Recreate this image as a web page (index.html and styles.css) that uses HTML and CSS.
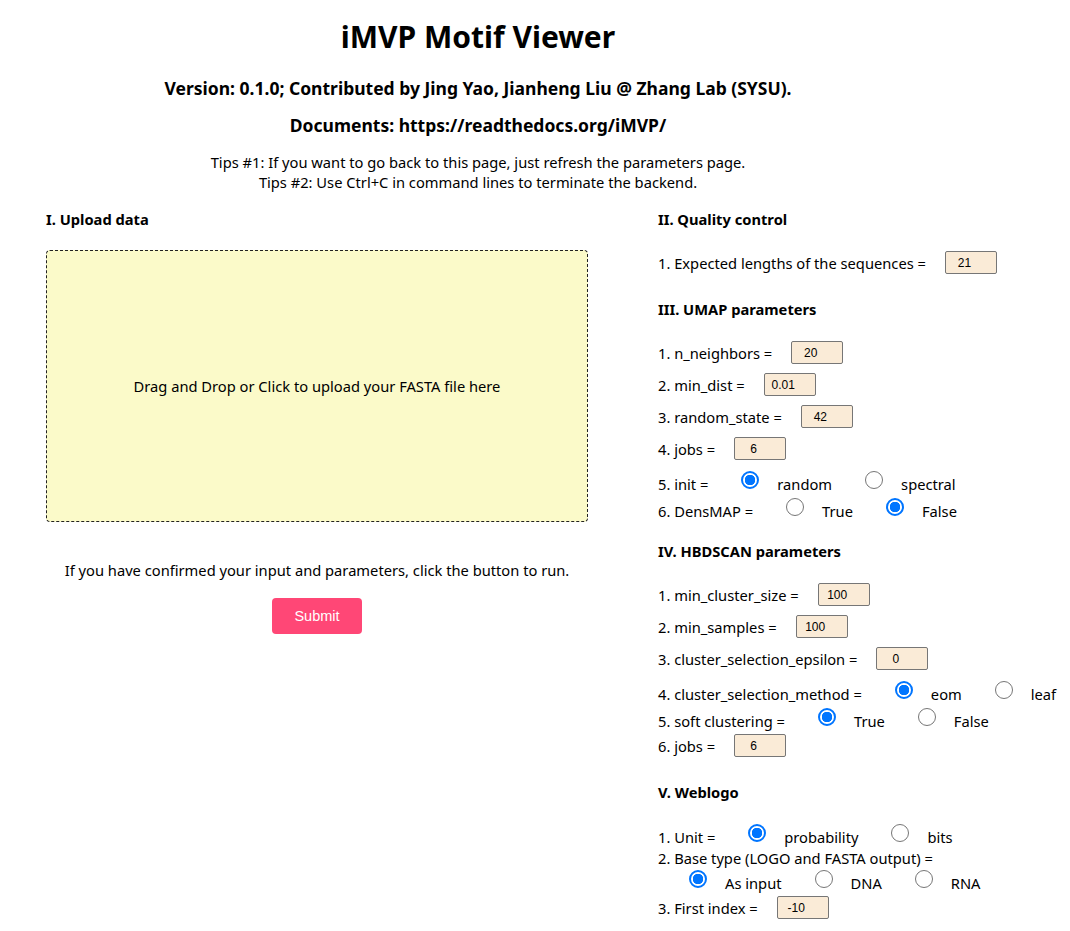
FILE: index.html
```html
<!DOCTYPE html>
<html lang="en">
<head>
<meta charset="utf-8">
<title>iMVP Motif Viewer</title>
<link rel="stylesheet" href="styles.css">
</head>
<body>
<div class="page">
  <header class="header">
    <h1 class="title">iMVP Motif Viewer</h1>
    <h3 class="subtitle">Version: 0.1.0; Contributed by Jing Yao, Jianheng Liu @ Zhang Lab (SYSU).</h3>
    <h3 class="subtitle docs">Documents: https://readthedocs.org/iMVP/</h3>
    <p class="tips">Tips #1: If you want to go back to this page, just refresh the parameters page.<br>Tips #2: Use Ctrl+C in command lines to terminate the backend.</p>
  </header>

  <div class="columns">
    <section class="col-left">
      <div class="sec-title">I. Upload data</div>
      <div class="dropzone">Drag and Drop or Click to upload your FASTA file here</div>
      <p class="confirm">If you have confirmed your input and parameters, click the button to run.</p>
      <button class="submit" type="button">Submit</button>
    </section>

    <section class="col-right">
      <div class="sec-title">II. Quality control</div>
      <div class="row input-row"><span>1. Expected lengths of the sequences =</span><input class="num" type="text" value="21"></div>

      <div class="sec-title after-input">III. UMAP parameters</div>
      <div class="row input-row"><span>1. n_neighbors =</span><input class="num" type="text" value="20"></div>
      <div class="row input-row"><span>2. min_dist =</span><input class="num" type="text" value="0.01"></div>
      <div class="row input-row"><span>3. random_state =</span><input class="num" type="text" value="42"></div>
      <div class="row input-row"><span>4. jobs =</span><input class="num" type="text" value="6"></div>
      <div class="row radio-row"><span>5. init =</span><input class="rad" type="radio" name="init" checked><span class="opt">random</span><input class="rad" type="radio" name="init"><span class="opt">spectral</span></div>
      <div class="row radio-row"><span>6. DensMAP =</span><input class="rad" type="radio" name="dens"><span class="opt">True</span><input class="rad" type="radio" name="dens" checked><span class="opt">False</span></div>

      <div class="sec-title after-radio">IV. HBDSCAN parameters</div>
      <div class="row input-row"><span>1. min_cluster_size =</span><input class="num" type="text" value="100"></div>
      <div class="row input-row"><span>2. min_samples =</span><input class="num" type="text" value="100"></div>
      <div class="row input-row"><span>3. cluster_selection_epsilon =</span><input class="num" type="text" value="0"></div>
      <div class="row radio-row"><span>4. cluster_selection_method =</span><input class="rad" type="radio" name="method" checked><span class="opt">eom</span><input class="rad" type="radio" name="method"><span class="opt">leaf</span></div>
      <div class="row radio-row"><span>5. soft clustering =</span><input class="rad" type="radio" name="soft" checked><span class="opt">True</span><input class="rad" type="radio" name="soft"><span class="opt">False</span></div>
      <div class="row input-row"><span>6. jobs =</span><input class="num" type="text" value="6"></div>

      <div class="sec-title after-input">V. Weblogo</div>
      <div class="row radio-row"><span>1. Unit =</span><input class="rad" type="radio" name="unit" checked><span class="opt">probability</span><input class="rad" type="radio" name="unit"><span class="opt">bits</span></div>
      <div class="row text-row"><span>2. Base type (LOGO and FASTA output) =</span></div>
      <div class="row radio-row indent"><input class="rad" type="radio" name="base" checked><span class="opt">As input</span><input class="rad" type="radio" name="base"><span class="opt">DNA</span><input class="rad" type="radio" name="base"><span class="opt">RNA</span></div>
      <div class="row input-row"><span>3. First index =</span><input class="num" type="text" value="-10"></div>
    </section>
  </div>
</div>
</body>
</html>
```

FILE: styles.css
```css
* { box-sizing: border-box; }

body {
  margin: 0;
  background: #ffffff;
  color: #000000;
  font-family: "Noto Sans", "Open Sans", sans-serif;
  font-size: 14.7px;
}

.page {
  width: 940px;
  margin-left: 8px;
}

.header {
  text-align: center;
}

.title {
  margin: 0;
  padding-top: 18px;
  font-size: 30px;
  line-height: 38px;
  font-weight: 700;
}

.subtitle {
  margin: 0;
  margin-top: 20px;
  font-size: 17.5px;
  line-height: 24px;
  font-weight: 700;
}

.subtitle.docs {
  margin-top: 13px;
}

.tips {
  margin: 15px 0 0;
  line-height: 20px;
}

.columns {
  display: flex;
  margin-top: 17px;
  padding-left: 38px;
  gap: 70px;
}

.col-left {
  flex: none;
  width: 542px;
  display: flex;
  flex-direction: column;
  align-items: center;
}

.col-right {
  flex: none;
  width: 400px;
  display: flex;
  flex-direction: column;
}

.sec-title {
  align-self: stretch;
  height: 20px;
  line-height: 20px;
  font-size: 14.7px;
  font-weight: 700;
}

.dropzone {
  align-self: stretch;
  margin-top: 21px;
  height: 272px;
  border: 1px dashed #222;
  border-radius: 4px;
  background: #fbfac9;
  display: flex;
  align-items: center;
  justify-content: center;
}

.confirm {
  margin: 38px 0 0;
  line-height: 20px;
  white-space: nowrap;
}

.submit {
  margin-top: 18px;
  width: 90px;
  height: 36px;
  border: none;
  border-radius: 4px;
  background: #ff4776;
  color: #ffffff;
  font-family: "Liberation Sans", Arial, sans-serif;
  font-size: 14.5px;
}

.row {
  display: flex;
  align-items: center;
  height: 25px;
  white-space: nowrap;
}

.text-row { height: 17px; }

.sec-title + .row { margin-top: 21px; }
.sec-title + .radio-row { margin-top: 22px; }
.input-row + .input-row { margin-top: 7px; }
.input-row + .radio-row { margin-top: 10px; }
.radio-row + .radio-row { margin-top: 2px; }
.radio-row + .input-row { margin-top: 0; }
.radio-row + .text-row { margin-top: 0; }
.text-row + .radio-row { margin-top: 4px; }
.sec-title.after-input { margin-top: 24px; }
.sec-title.after-radio { margin-top: 18px; }

.num {
  margin-left: 19px;
  width: 52px;
  height: 23px;
  border: 1px solid #767676;
  border-radius: 2px;
  background: #faebd7;
  font-family: "Liberation Sans", Arial, sans-serif;
  font-size: 12px;
  color: #000;
  text-align: center;
  padding: 0 13px 0 0;
}

.rad {
  appearance: none;
  -webkit-appearance: none;
  margin: 0 0 0 33px;
  width: 18px;
  height: 18px;
  border: 1px solid #767676;
  border-radius: 50%;
  background: #fff;
  position: relative;
  top: -4px;
}

.rad:checked {
  border: 2px solid #0075ff;
  background: radial-gradient(circle, #0075ff 0 5px, #ffffff 5.5px);
}

.indent .rad:first-child { margin-left: 31px; }

.opt {
  margin-left: 18px;
}
```
